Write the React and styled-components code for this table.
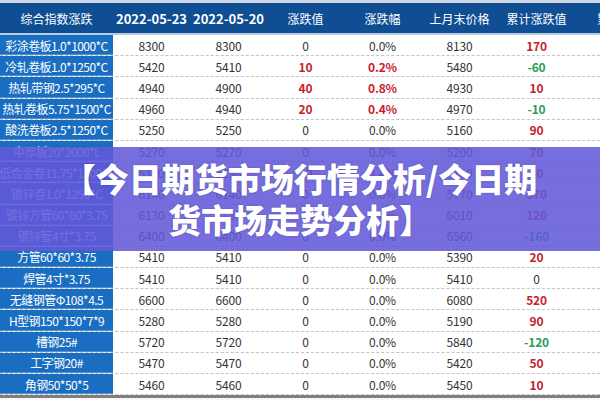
import React from 'react';
import styled, { createGlobalStyle } from 'styled-components';

const GlobalStyle = createGlobalStyle`
    html, body {
        margin: 0;
        padding: 0;
        background: #ffffff;
        font-family: "Noto Sans CJK SC", "Noto Sans", sans-serif;
    }
`;

const COLS = '113px repeat(6, 77px) 104px';
const RED = '#c4232b';
const GREEN = '#2a9e58';

const rows = [
    { name: '彩涂卷板1.0*1000*C', a: 8300, b: 8300, last: 8130 },
    { name: '冷轧卷板1.0*1250*C', a: 5420, b: 5410, last: 5480 },
    { name: '热轧带钢2.5*295*C', a: 4940, b: 4900, last: 4930 },
    { name: '热轧卷板5.75*1500*C', a: 4960, b: 4940, last: 4970 },
    { name: '酸洗卷板2.5*1250*C', a: 5250, b: 5250, last: 5160 },
    { name: '中厚板20*2000*L', a: 5270, b: 5270, last: 5200 },
    { name: '低合金卷11.75*1500*C', a: 5150, b: 5130, last: 5110 },
    { name: '镀锌卷1.0*1250*C', a: 6140, b: 6140, last: 5770 },
    { name: '镀锌方管60*60*3.75', a: 6130, b: 6130, last: 6010 },
    { name: '镀锌管4寸*3.75', a: 6400, b: 6400, last: 6560 },
    { name: '方管60*60*3.75', a: 5410, b: 5410, last: 5390 },
    { name: '焊管4寸*3.75', a: 5410, b: 5410, last: 5410 },
    { name: '无缝钢管Φ108*4.5', a: 6600, b: 6600, last: 6080 },
    { name: 'H型钢150*150*7*9', a: 5280, b: 5280, last: 5190 },
    { name: '槽钢25#', a: 5720, b: 5720, last: 5840 },
    { name: '工字钢20#', a: 5470, b: 5470, last: 5420 },
    { name: '角钢50*50*5', a: 5460, b: 5460, last: 5450 },
];

const headers = [
    { label: '综合指数涨跌' },
    { label: '2022-05-23', bold: true },
    { label: '2022-05-20', bold: true },
    { label: '涨跌值' },
    { label: '涨跌幅' },
    { label: '上月末价格' },
    { label: '累计涨跌值' },
    { label: '累计涨跌幅' },
];

const tone = v => (v > 0 ? 'up' : v < 0 ? 'down' : 'flat');

export default function App() {
    return (
        <Page>
            <GlobalStyle />
            <Table>
                <HeaderRow>
                    {headers.map(h => (
                        <HeadCell key={h.label} bold={h.bold}>{h.label}</HeadCell>
                    ))}
                </HeaderRow>
                {rows.map(r => {
                    const diff = r.a - r.b;
                    const pct = ((diff / r.b) * 100).toFixed(1) + '%';
                    const cum = r.a - r.last;
                    const cumPct = ((cum / r.last) * 100).toFixed(2) + '%';
                    return (
                        <Row key={r.name}>
                            <NameCell>{r.name}</NameCell>
                            <Cell>{r.a}</Cell>
                            <Cell>{r.b}</Cell>
                            <Cell tone={tone(diff)}>{diff}</Cell>
                            <Cell tone={tone(diff)}>{pct}</Cell>
                            <Cell>{r.last}</Cell>
                            <Cell tone={tone(cum)}>{cum}</Cell>
                            <Cell tone={tone(cum)}>{cumPct}</Cell>
                        </Row>
                    );
                })}
                <BottomRule />
                <Banner>
                    <BannerLine>【今日期货市场行情分析/今日期</BannerLine>
                    <BannerLine>货市场走势分析】</BannerLine>
                </Banner>
            </Table>
        </Page>
    );
}

const Page = styled.div`
    width: 600px;
    height: 400px;
    overflow: hidden;
    background: #f7f7f7;
`;

const Table = styled.div`
    position: relative;
    width: 600px;
    display: flex;
    flex-direction: column;
    border-top: 3px solid #cdd6e2;
    background: #ffffff;
    overflow: hidden;
`;

const HeaderRow = styled.div`
    display: grid;
    grid-template-columns: ${COLS};
    height: 30px;
    background: #104e93;
    border-bottom: 2px solid #b9cbe0;
`;

const HeadCell = styled.div`
    display: flex;
    align-items: center;
    justify-content: center;
    white-space: nowrap;
    color: #ffffff;
    font-size: ${p => (p.bold ? '13px' : '12px')};
    font-weight: ${p => (p.bold ? 700 : 400)};
`;

const Row = styled.div`
    display: grid;
    grid-template-columns: ${COLS};
    height: 21.2px;
    box-sizing: border-box;
    border-bottom: 1px dashed #c4c4c4;
    &:last-of-type {
        border-bottom: none;
    }
`;

const NameCell = styled.div`
    display: flex;
    align-items: center;
    justify-content: center;
    white-space: nowrap;
    overflow: hidden;
    background: #1a6ec1;
    color: #ffffff;
    font-size: 12px;
    letter-spacing: -0.55px;
    box-shadow: inset 0 -1px 0 rgba(255, 255, 255, 0.25);
`;

const Cell = styled.div`
    display: flex;
    align-items: center;
    justify-content: center;
    white-space: nowrap;
    font-size: 12px;
    letter-spacing: -0.2px;
    font-weight: ${p => (p.tone === 'up' || p.tone === 'down' ? 700 : 400)};
    color: ${p => (p.tone === 'up' ? RED : p.tone === 'down' ? GREEN : '#333333')};
`;

const BottomRule = styled.div`
    height: 3px;
    background: #7f7f7f;
`;

const Banner = styled.div`
    position: absolute;
    left: 0;
    right: 0;
    top: 144px;
    height: 104px;
    display: flex;
    flex-direction: column;
    align-items: center;
    justify-content: center;
    background: rgba(98, 88, 216, 0.87);
`;

const BannerLine = styled.div`
    color: #ffffff;
    font-size: 33px;
    line-height: 41px;
    font-weight: 900;
    white-space: nowrap;
    text-shadow: 0 0 2px rgba(40, 30, 120, 0.35);
`;
